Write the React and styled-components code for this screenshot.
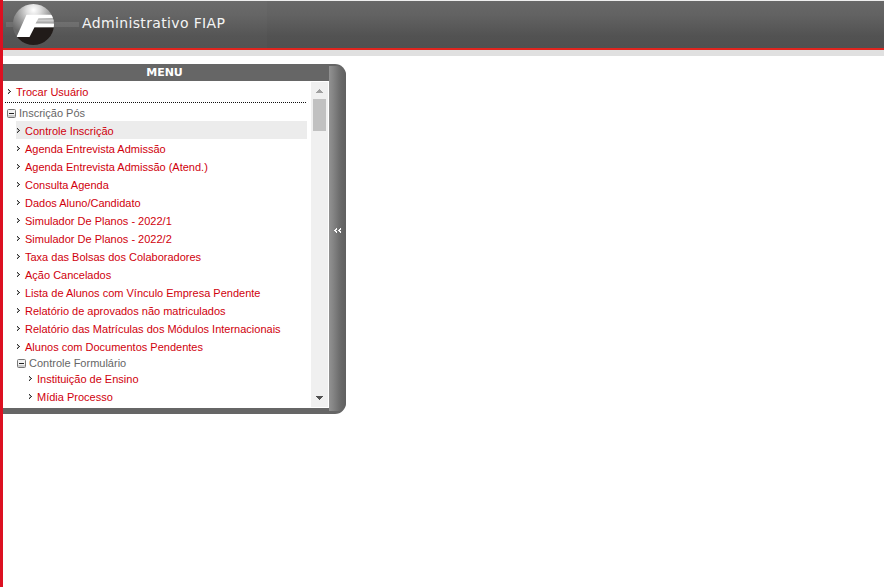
import React from "react";
import styled, { createGlobalStyle } from "styled-components";

const Global = createGlobalStyle`
  * { box-sizing: border-box; }
  html, body { margin: 0; background: #fff; overflow: hidden; }
`;
const Page = styled.div`
  width: 100vw;
  height: 100vh;
  border-left: 3px solid #dc1021;
  font: 11px "Liberation Sans", Arial, sans-serif;
`;
const Header = styled.header`
  height: 56px;
  border-top: 1px solid #eee;
  border-bottom: 6px solid #e0e0e0;
`;
const Banner = styled.div`
  display: flex;
  height: 49px;
  border-bottom: 2px solid #e1251f;
  background: linear-gradient(90deg, rgba(255,255,255,.02) 264px, transparent 264px),
    linear-gradient(#686868, #626262 30%, #525252 75%, #505050);
`;
const Title = styled.h1`
  margin: 0;
  padding: 14px 0 0 3px;
  color: #f4f4f4;
  font: 400 14px/16px "DejaVu Sans", Verdana, sans-serif;
  letter-spacing: 0.36px;
  white-space: nowrap;
`;
const Panel = styled.section`
  display: flex;
  width: 343px;
  height: 350px;
  margin-top: 8px;
  background: #666;
  border-radius: 0 11px 11px 0;
  overflow: hidden;
`;
const Main = styled.div`
  width: 326px;
`;
const MenuTitle = styled.h2`
  margin: 0;
  height: 17px;
  padding-right: 3px;
  color: #fff;
  text-align: center;
  font: bold 11px/18px "DejaVu Sans", Verdana, sans-serif;
`;
const Viewport = styled.div`
  display: flex;
  height: 327px;
  background: #fff;
  padding: 1px 1px 1px 0;
`;
const List = styled.nav`
  width: 308px;
  overflow: hidden;
`;
const Row = styled.div`
  display: flex;
  align-items: center;
  height: ${(p) => p.$h || 18}px;
  margin-left: ${(p) => p.$left}px;
  margin-right: 4px;
  padding-top: ${(p) => p.$top ?? 2}px;
  background: ${(p) => (p.$active ? "#ececec" : "transparent")};
  color: ${(p) => (p.$group ? "#666" : "#d0000c")};
  white-space: nowrap;
  svg { flex: none; }
`;
const Divider = styled.div`
  height: 1px;
  margin: 2px 5px 0 2px;
  background: repeating-linear-gradient(90deg, #111 0 1px, #fff 1px 2px);
`;
const Scrollbar = styled.div`
  display: flex;
  flex-direction: column;
  align-items: center;
  justify-content: space-between;
  width: 17px;
  background: #f0f0f0;
`;
const Thumb = styled.div`
  width: 13px;
  height: 32px;
  background: #c1c1c1;
  margin-bottom: auto;
`;
const ScrollButton = styled.div`
  height: 17px;
  width: 17px;
  svg { display: block; }
`;
const Handle = styled.div`
  display: flex;
  align-items: center;
  justify-content: center;
  width: 17px;
  height: 345px;
  margin-top: 2px;
  padding-bottom: 16px;
  border-radius: 0 9px 8px 0;
  background: linear-gradient(90deg, #929292, #848484 25%, #686868 70%, #606060);
`;

const Bullet = () => (
  <svg width="9" height="6" viewBox="0 0 9 6" shapeRendering="crispEdges" fill="#333">
    <path d="M1 0h1v1h-1zM2 1h1v1h-1zM3 2h1v1h-1zM2 3h1v1h-1zM1 4h1v1h-1z" />
    <path d="M1 1h1v1h-1zM2 2h1v1h-1zM1 3h1v1h-1z" fill="#aaa" />
  </svg>
);
const Collapse = () => (
  <svg width="12" height="9" viewBox="0 0 12 9">
    <rect x=".5" y=".5" width="8" height="8" rx="1" fill="#f2f2f2" stroke="#777" />
    <path d="M1 6h7v2h-7z" fill="#ccc" />
    <path d="M2 4.5h5" stroke="#222" />
  </svg>
);
const Logo = () => (
  <svg width="76" height="47" viewBox="3 1 76 47">
    <defs>
      <radialGradient id="sphere" cx="50%" cy="16%" r="62%">
        <stop offset="0" stopColor="#fff" />
        <stop offset=".25" stopColor="#dedede" />
        <stop offset=".65" stopColor="#969696" />
        <stop offset="1" stopColor="#686868" />
      </radialGradient>
      <clipPath id="ball"><circle cx="33.4" cy="24.5" r="20.6" /></clipPath>
    </defs>
    <path d="M6 22h73v5h-73z" fill="#fff" opacity=".1" />
    <g clipPath="url(#ball)">
      <path d="M12 3h43v43h-43z" fill="url(#sphere)" />
      <path d="M28 36.5l5-9.3h22v19h-38v-9.7z" fill="#211b19" />
      <path d="M37 18.5h17v5h-19z" fill="#aaa" />
      <path d="M37 19.5h17v2h-18z" fill="#ccc" />
      <path d="M26.5 14.7h25l2.5 3.5h-15.500l-3 5.300h19v3.800h-20l-5 9.700h-13z" fill="#fff" />
    </g>
  </svg>
);

const items = [
  "Controle Inscrição",
  "Agenda Entrevista Admissão",
  "Agenda Entrevista Admissão (Atend.)",
  "Consulta Agenda",
  "Dados Aluno/Candidato",
  "Simulador De Planos - 2022/1",
  "Simulador De Planos - 2022/2",
  "Taxa das Bolsas dos Colaboradores",
  "Ação Cancelados",
  "Lista de Alunos com Vínculo Empresa Pendente",
  "Relatório de aprovados não matriculados",
  "Relatório das Matrículas dos Módulos Internacionais",
  "Alunos com Documentos Pendentes",
];

export default function App() {
  return (
    <Page>
      <Global />
      <Header>
        <Banner><Logo /><Title>Administrativo FIAP</Title></Banner>
      </Header>
      <Panel>
        <Main>
          <MenuTitle>MENU</MenuTitle>
          <Viewport>
            <List>
              <Row $left={4} $top={1}><Bullet />Trocar Usuário</Row>
              <Divider />
              <Row $group $left={4} $top={2}><Collapse />Inscrição Pós</Row>
              {items.map((label, i) => (
                <Row key={label} $left={13} $active={i === 0}>
                  <Bullet />{label}
                </Row>
              ))}
              <Row $group $left={14} $h={14} $top={2}><Collapse />Controle Formulário</Row>
              <Row $left={25}><Bullet />Instituição de Ensino</Row>
              <Row $left={25}><Bullet />Mídia Processo</Row>
            </List>
            <Scrollbar>
              <ScrollButton>
                <svg width="17" height="17" shapeRendering="crispEdges"><path d="M5 11h7v-1h-1v-1h-1v-1h-1v-1h-1v1h-1v1h-1v1h-1z" fill="#a0a0a0" /></svg>
              </ScrollButton>
              <Thumb />
              <ScrollButton>
                <svg width="17" height="17" shapeRendering="crispEdges"><path d="M5 6h7v1h-1v1h-1v1h-1v1h-1v-1h-1v-1h-1v-1h-1z" fill="#505050" /></svg>
              </ScrollButton>
            </Scrollbar>
          </Viewport>
        </Main>
        <Handle>
          <svg width="7" height="5" shapeRendering="crispEdges" fill="#fff">
            <path d="M2 0h1v1h-1zM1 1h2v1h-2zM0 2h2v1h-2zM1 3h2v1h-2zM2 4h1v1h-1zM6 0h1v1h-1zM5 1h2v1h-2zM4 2h2v1h-2zM5 3h2v1h-2zM6 4h1v1h-1z" />
          </svg>
        </Handle>
      </Panel>
    </Page>
  );
}
